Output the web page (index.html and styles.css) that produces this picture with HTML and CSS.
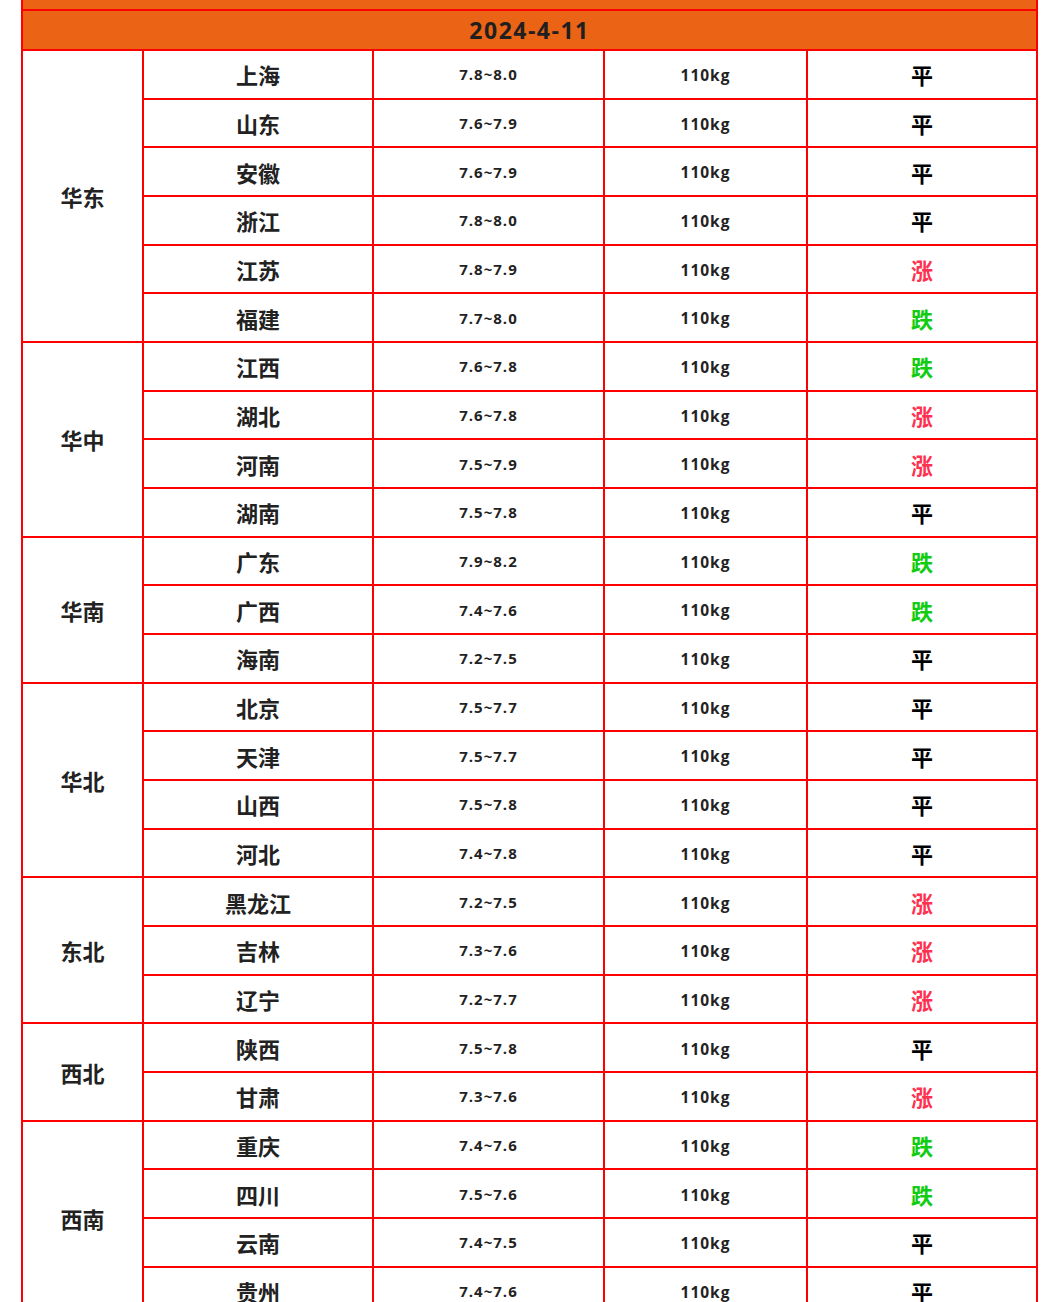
FILE: index.html
```html
<!DOCTYPE html>
<html lang="zh">
<head>
<meta charset="utf-8">
<title>2024-4-11 生猪价格</title>
<link rel="stylesheet" href="styles.css">
</head>
<body>
<table class="price-table">
  <colgroup>
    <col class="c-region"><col class="c-prov"><col class="c-price"><col class="c-weight"><col class="c-trend">
  </colgroup>
  <tr class="top-row"><td colspan="5"></td></tr>
  <tr class="date-row"><td colspan="5">2024-4-11</td></tr>

  <tr><td class="region" rowspan="6">华东</td><td class="prov">上海</td><td class="price">7.8~8.0</td><td class="weight">110kg</td><td class="trend flat">平</td></tr>
  <tr><td class="prov">山东</td><td class="price">7.6~7.9</td><td class="weight">110kg</td><td class="trend flat">平</td></tr>
  <tr><td class="prov">安徽</td><td class="price">7.6~7.9</td><td class="weight">110kg</td><td class="trend flat">平</td></tr>
  <tr><td class="prov">浙江</td><td class="price">7.8~8.0</td><td class="weight">110kg</td><td class="trend flat">平</td></tr>
  <tr><td class="prov">江苏</td><td class="price">7.8~7.9</td><td class="weight">110kg</td><td class="trend up">涨</td></tr>
  <tr><td class="prov">福建</td><td class="price">7.7~8.0</td><td class="weight">110kg</td><td class="trend down">跌</td></tr>

  <tr><td class="region" rowspan="4">华中</td><td class="prov">江西</td><td class="price">7.6~7.8</td><td class="weight">110kg</td><td class="trend down">跌</td></tr>
  <tr><td class="prov">湖北</td><td class="price">7.6~7.8</td><td class="weight">110kg</td><td class="trend up">涨</td></tr>
  <tr><td class="prov">河南</td><td class="price">7.5~7.9</td><td class="weight">110kg</td><td class="trend up">涨</td></tr>
  <tr><td class="prov">湖南</td><td class="price">7.5~7.8</td><td class="weight">110kg</td><td class="trend flat">平</td></tr>

  <tr><td class="region" rowspan="3">华南</td><td class="prov">广东</td><td class="price">7.9~8.2</td><td class="weight">110kg</td><td class="trend down">跌</td></tr>
  <tr><td class="prov">广西</td><td class="price">7.4~7.6</td><td class="weight">110kg</td><td class="trend down">跌</td></tr>
  <tr><td class="prov">海南</td><td class="price">7.2~7.5</td><td class="weight">110kg</td><td class="trend flat">平</td></tr>

  <tr><td class="region" rowspan="4">华北</td><td class="prov">北京</td><td class="price">7.5~7.7</td><td class="weight">110kg</td><td class="trend flat">平</td></tr>
  <tr><td class="prov">天津</td><td class="price">7.5~7.7</td><td class="weight">110kg</td><td class="trend flat">平</td></tr>
  <tr><td class="prov">山西</td><td class="price">7.5~7.8</td><td class="weight">110kg</td><td class="trend flat">平</td></tr>
  <tr><td class="prov">河北</td><td class="price">7.4~7.8</td><td class="weight">110kg</td><td class="trend flat">平</td></tr>

  <tr><td class="region" rowspan="3">东北</td><td class="prov">黑龙江</td><td class="price">7.2~7.5</td><td class="weight">110kg</td><td class="trend up">涨</td></tr>
  <tr><td class="prov">吉林</td><td class="price">7.3~7.6</td><td class="weight">110kg</td><td class="trend up">涨</td></tr>
  <tr><td class="prov">辽宁</td><td class="price">7.2~7.7</td><td class="weight">110kg</td><td class="trend up">涨</td></tr>

  <tr><td class="region" rowspan="2">西北</td><td class="prov">陕西</td><td class="price">7.5~7.8</td><td class="weight">110kg</td><td class="trend flat">平</td></tr>
  <tr><td class="prov">甘肃</td><td class="price">7.3~7.6</td><td class="weight">110kg</td><td class="trend up">涨</td></tr>

  <tr><td class="region" rowspan="4">西南</td><td class="prov">重庆</td><td class="price">7.4~7.6</td><td class="weight">110kg</td><td class="trend down">跌</td></tr>
  <tr><td class="prov">四川</td><td class="price">7.5~7.6</td><td class="weight">110kg</td><td class="trend down">跌</td></tr>
  <tr><td class="prov">云南</td><td class="price">7.4~7.5</td><td class="weight">110kg</td><td class="trend flat">平</td></tr>
  <tr><td class="prov">贵州</td><td class="price">7.4~7.6</td><td class="weight">110kg</td><td class="trend flat">平</td></tr>
</table>
</body>
</html>
```

FILE: styles.css
```css
html, body {
  margin: 0;
  padding: 0;
  background: #ffffff;
}

body {
  font-family: "Noto Sans CJK SC", "Noto Sans", sans-serif;
  color: #222222;
}

.price-table {
  margin-left: 21px;
  width: 1015px;
  border-collapse: collapse;
  table-layout: fixed;
}

.c-region { width: 121px; }
.c-prov { width: 230px; }
.c-price { width: 231px; }
.c-weight { width: 203px; }
.c-trend { width: 230px; }

.price-table td {
  border: 2px solid #ff0000;
  padding: 0;
  text-align: center;
  vertical-align: middle;
  height: 46.68px;
  line-height: 1;
}

.price-table .top-row td {
  background: #eb6315;
  border-top: 0;
  height: 9px;
}

.price-table .date-row td {
  background: #eb6315;
  height: 38px;
  font-family: "Open Sans", "Noto Sans", sans-serif;
  font-size: 23px;
  font-weight: 700;
  letter-spacing: 1.5px;
  color: #1f1f1f;
}

.region,
.prov {
  font-size: 22px;
  font-weight: 700;
  color: #222222;
}

.price-table td.price {
  font-family: "Open Sans", "Noto Sans", sans-serif;
  font-size: 15px;
  font-weight: 700;
  letter-spacing: 1px;
  color: #222222;
  padding-top: 1px;
  height: 45.68px;
}

.price-table td.weight {
  font-family: "Open Sans", "Noto Sans", sans-serif;
  font-size: 15.5px;
  font-weight: 700;
  letter-spacing: 1px;
  color: #222222;
  padding-top: 3px;
  height: 43.68px;
}

.trend {
  font-size: 22px;
  font-weight: 700;
}

.flat { color: #000000; }
.up { color: #ff3050; }
.down { color: #11cc11; }
```
